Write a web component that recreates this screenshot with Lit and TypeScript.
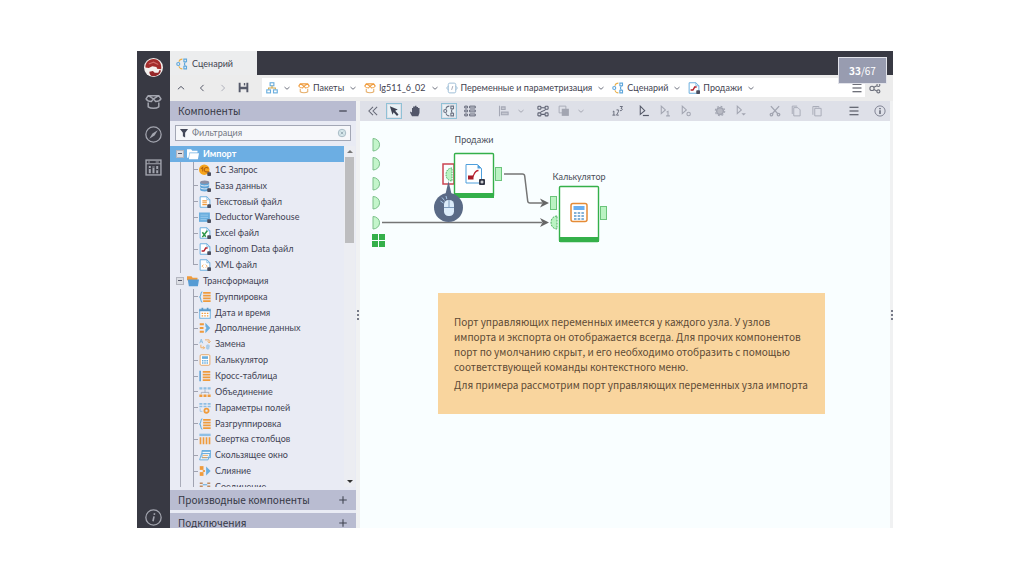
import { LitElement, html, svg, css, nothing } from "lit";
import { customElement, property, state } from "lit/decorators.js";
import { classMap } from "lit/directives/class-map.js";

const BLUE = "#6aaede";
const ORANGE = "#ef9b3c";
const INK = "#4b4e5e";
const GREEN = "#35b04a";

const fileShape = svg`<path d="M1.500 1h9l4 4v10h-13z" fill="#fff" stroke=${BLUE} stroke-width="1.300"/><path d="M10.500 1v4h4" fill="none" stroke=${BLUE}/>`;
const plug = svg`<rect x="11" y="11" width="5" height="5" rx="1" fill="${INK}"/>`;
const bars = (x: number) => svg`<path d="M${x} 2.500h10M${x} 6.200h10M${x} 9.800h10M${x} 13.500h10" stroke=${ORANGE} stroke-width="2.200"/>`;
const box = (flaps: string, body: string) => svg`<g fill="none" stroke-width="1.400" stroke-linejoin="round"><path d="M3 9v4c2.500 1.800 7.500 1.800 10 0V9" stroke=${body}/><path d="M3 2.500h10M8 5.500L3 2.500 1 5.500c1 2 3.500 2.500 5 2.500zM8 5.500l5-3 2 3c-1 2-3.500 2.500-5 2.500z" stroke=${flaps}/></g>`;
const flow = (node: string, link: string) => svg`<g fill="none" stroke-width="1.500"><path d="M4 5c.5-2.500 2-3.500 4.500-3.500M4 11c.5 2.500 2 3.500 4.500 3.500" stroke=${link}/><circle cx="3" cy="8" r="2" stroke=${node}/><path d="M10.500 1.500H14v3.500h-3.500zM10.500 11H14v3.500h-3.500z" stroke=${node}/><path d="M12.500 5.500c-1.500 1.500-1.500 3.500 0 5" stroke=${node}/></g>`;

const ICONS: Record<string, unknown> = {
  onec: svg`<circle cx="7" cy="7.500" r="7" fill="#f7a51c"/><path d="M2.500 6.500L5 4.500V10M12.500 6A3 3 0 1 0 9 10.500H14" fill="none" stroke="#b3620f" stroke-width="1.400"/>${plug}`,
  db: svg`<path d="M1.500 3v10c0 3 12 3 12 0V3" fill="#5fa4d8"/><ellipse cx="7.500" cy="3" rx="6" ry="2.200" fill="#8b8fa5"/><path d="M1.500 6c1 2.500 11 2.500 12 0M1.500 10c1 2.500 11 2.500 12 0" stroke="#e9ecf4" stroke-width="1.300" fill="none"/>${plug}`,
  text: svg`${fileShape}<path d="M4.500 6.500h6M4.500 9h6M4.500 11.500h6" stroke="${ORANGE}" stroke-width="1.400"/>${plug}`,
  warehouse: svg`<rect x="0" y="2" width="14.500" height="12.500" fill=${BLUE}/><path d="M2 5.500h10M2 8.500h10M2 11.500h8" stroke="#a5d2f0" stroke-width="1"/>${plug}`,
  excel: svg`${fileShape}<path d="M4.500 7l4.500 6M11 5l-6.500 8.500" stroke="#2c9648" stroke-width="2"/>${plug}`,
  lgd: svg`${fileShape}<path d="M3.500 10.500h3.500M6.500 11l2.500-4.500h2.500" stroke="#b3202c" stroke-width="2" fill="none"/>${plug}`,
  xml: svg`${fileShape}<path d="M6 7.500L4 9.500l2 2M9 7.500l2 2-2 2" stroke="${ORANGE}" fill="none"/>${plug}`,
  group: svg`<path d="M4.500 1C1.500 1 3.500 6 1 8c2.500 2 .5 7 3.500 7" fill="none" stroke=${BLUE} stroke-width="1.500"/>${bars(5.5)}`,
  date: svg`<rect x="1" y="3" width="14" height="12" fill="#fff" stroke=${BLUE} stroke-width="1.300"/><path d="M.5 4.500h15M4.500 1v3M11.500 1v3" stroke="#5b98c9" stroke-width="2.200"/><path d="M3.500 8.500h2m1.500 0h2m1.500 0h2M3.500 11.800h2m1.500 0h2m1.500 0h2" stroke=${ORANGE} stroke-width="1.500"/>`,
  enrich: svg`<path d="M1 3h5.500M1 8h5M1 13h5.500" stroke=${ORANGE} stroke-width="2.600"/><path d="M8.500 1l6.500 7-6.500 7v-5l1.500-2-1.500-2z" fill=${BLUE}/>`,
  replace: svg`<g fill="none" stroke-width="1.300"><path d="M1 7l2-5.500L5 7M1.800 5h2.500M10.500 9.500v5h2a1.300 1.300 0 0 0 0-2.500h-2m0-2.500h2a1.200 1.200 0 0 1 0 2.500" stroke="#8fbfe4"/><path d="M8 2.500h5.500v4M11.500 4.500l2 2 2-2M2.500 9v4h5M5.500 11l2 2-2 2" stroke="#f0ae67"/></g>`,
  calc: svg`<rect x="1.500" y="1" width="13" height="14" rx="1.500" fill="#fff" stroke="#e4a564" stroke-width="1.300"/><rect x="4" y="3" width="8" height="3.500" fill=${BLUE}/><path d="M4 9h2m1 0h2m1 0h2M4 12h2m1 0h2m1 0h2" stroke=${BLUE} stroke-width="1.800"/>`,
  cross: svg`<path d="M1.500 1v14" stroke="#4d9ad4" stroke-width="1.900"/>${bars(5)}`,
  union: svg`<path d="M.5 3h4m1.500 0h4m1.500 0h4" stroke="#8fbfe4" stroke-width="3"/><path d="M8 5v4M3 10.500V8.500h10v2" stroke="#9aa3b0" fill="none"/><path d="M.5 13h4m1.500 0h4m1.500 0h4" stroke=${ORANGE} stroke-width="3.200"/>`,
  fields: svg`<path d="M.5 2.500h4m1.500 0h4m1.500 0h4M.5 6h4m1.500 0h4m1.500 0h4" stroke="#8fbfe4" stroke-width="2.200"/><circle cx="10" cy="11.500" r="2.800" fill="none" stroke=${ORANGE} stroke-width="2.400"/><path d="M1.500 8.500v4h3" stroke="#8fbfe4" fill="none"/>`,
  fold: svg`<path d="M.5 2.500h15" stroke="#8fbfe4" stroke-width="3.200"/><path d="M2 5.500V15M6 5.500V15M10 5.500V15M14 5.500V15" stroke=${ORANGE} stroke-width="2.200"/>`,
  window: svg`<path d="M4 2h11.500v9.500H4zM.8 14.500L3.500 6h11.300l-2.700 8.500z" fill="#eef5fb" stroke=${BLUE} stroke-width="1.300"/><path d="M4 2.800h11.500" stroke=${BLUE} stroke-width="2"/><path d="M5 8.500h7M4 11.500h7" stroke=${ORANGE}/>`,
  merge: svg`<rect x="1" y="1.500" width="5" height="5" fill=${ORANGE}/><rect x="1" y="9.500" width="5" height="5" fill=${ORANGE}/><path d="M5 8h3" stroke=${ORANGE} stroke-width="2.400"/><path d="M9.500 2l6 6-6 6z" fill=${BLUE}/>`,
  join: svg`<path d="M1 3h4m6 0h4M1 7h4m6 0h4M1 11h4m6 0h4" stroke="#c08c60" stroke-width="2"/><path d="M5 5h6" stroke=${BLUE} stroke-width="1.500"/>`,
  folderOpen: svg`<path d="M0 1.500h5.500l1.500 2h7V6H3.200L2 13H0z" fill="#fff"/><path d="M3.500 7H16l-1.500 8h-12z" fill="#fff"/>`,
  folder: svg`<path d="M0 1.500h6L7.500 3.500H14V7H0z" fill=${ORANGE}/><path d="M1 6h15l-1.500 9H2.500z" fill="#579cd4"/>`,
  flow: flow("#5fa7dc", "#e9b04c"),
  flowDark: flow("#6d7283", "#6d7283"),
  sitemap: svg`<g fill="none" stroke-width="1.500"><rect x="5.500" y="1" width="5" height="4" stroke=${BLUE}/><path d="M8 5v3M3.500 10V8h9v2" stroke="#d0a850"/><rect x="1" y="10.500" width="5" height="4" stroke=${BLUE}/><rect x="10" y="10.500" width="5" height="4" stroke=${BLUE}/></g>`,
  pack: box(ORANGE, "#e5ad68"),
  packLight: box("#a3a5af", "#a3a5af"),
  module: svg`<g fill="none" stroke="#9dbdd6" stroke-width="1.300"><rect x="3" y="1.500" width="10" height="13" rx="2"/><path d="M3 5.500L.8 8 3 10.500M13 5.500L15.200 8 13 10.500"/><path d="M9 5.500l-1.500 5" stroke="#a5a8b5"/></g>`,
  up: svg`<path d="M3 10l5-4.500 5 4.500" fill="none" stroke="${INK}" stroke-width="1.500"/>`,
  left: svg`<path d="M10.500 3L5.500 8l5 5" fill="none" stroke="${INK}" stroke-width="1.500"/>`,
  right: svg`<path d="M5.500 3l5 5-5 5" fill="none" stroke="#a9abb6" stroke-width="1.500"/>`,
  down: svg`<path d="M4 6.500l4 3.500 4-3.500" fill="none" stroke="#666a78" stroke-width="1.500"/>`,
  save: svg`<path d="M1 1h2.800v6h8.400V1H15v14h-2.800v-4.500H3.800V15H1z" fill="#555969"/><path d="M8.500 1.500h2V5h-2z" fill="#555969"/>`,
  menu: svg`<path d="M2 3h12M2 8h12M2 13h12" stroke="#40434f" stroke-width="1.600"/>`,
  share: svg`<g fill="none" stroke="#6d707c" stroke-width="1.500"><circle cx="4" cy="8.500" r="2.800"/><circle cx="12.500" cy="4" r="2"/><circle cx="12.500" cy="12.500" r="2"/><path d="M6.500 7l4-2M6.500 10l4 2"/></g>`,
  collapse: svg`<path d="M8 2.500L2.500 8 8 13.500M13.500 2.500L8 8l5.500 5.500" fill="none" stroke="#666977" stroke-width="1.400"/>`,
  cursor: svg`<path d="M2.500 1.500L13 6 9.500 7.500l4.500 5-2 2-4.500-5L6 13z" fill="#3e4252"/>`,
  hand: svg`<path d="M4 15C2.500 12 1 10 1.500 8.500L4 10V4h1.500V2H8V1h2v1.500h2V4h2v6c0 2-1.500 3-1.500 5z" fill="#53576a"/>`,
  list: svg`<g fill="none" stroke="#606475" stroke-width="1.300"><path d="M1 1.500h3.500v2.500H1zM7.500 1.500H15v2.500H7.500zM1 6.700h3.500v2.500H1zM7.500 6.700H15v2.500H7.500zM1 12h3.500v2.500H1zM7.500 12H15v2.500H7.500z"/></g>`,
  align: svg`<path d="M2 1v14M4.500 2.500h5v3.500h-5zM4.500 9.500h9v3.500h-9z" fill="#c5c7d0" stroke="#a5a8b5" stroke-width="1.400"/>`,
  graph: svg`<g fill="none" stroke="#5c6071" stroke-width="1.400"><rect x="1.200" y="1.700" width="4" height="4" rx="1"/><rect x="10.800" y="1.700" width="4" height="4" rx="1"/><rect x="1.200" y="10.500" width="4" height="4" rx="1"/><rect x="10.800" y="10.500" width="4" height="4" rx="1"/><path d="M5.500 3.700h5M5.500 12.500h5M11.500 6C9 9 7 7 4.500 10"/></g>`,
  layers: svg`<path d="M1.500 1.500h9v9h-9z" fill="none" stroke="#a9acb8" stroke-width="1.300"/><path d="M5 5h9.500v9.500H5z" fill="#a2a5b1"/>`,
  order: svg`<g fill="none" stroke="#696d7c" stroke-width="1.300"><path d="M1 9l1.500-1v5.500M0.500 13.500h4M6 6.500h2.500v2.500L6 13.500h3M10.500 2H14L12 4.500c3 0 2 3.500-1.500 3"/></g>`,
  run: svg`<path d="M3 1.500v11l6-5z" fill="none" stroke="#555968" stroke-width="1.400"/><path d="M6.500 14h8" stroke="#555968" stroke-width="1.600"/>`,
  runOne: svg`<path d="M3 1.500v10l5.500-5z" fill="none" stroke="#a2a5b1" stroke-width="1.400"/><path d="M10 9.500l2-1V14M9.500 14.500h5" fill="none" stroke="#a2a5b1" stroke-width="1.400"/>`,
  runGear: svg`<path d="M3 1.500v10l5.500-5z" fill="none" stroke="#a2a5b1" stroke-width="1.400"/><circle cx="11.500" cy="12" r="2.300" fill="none" stroke="#a2a5b1" stroke-width="1.400"/>`,
  runDown: svg`<path d="M3 1.500v10l5.500-5z" fill="none" stroke="#a2a5b1" stroke-width="1.400"/><path d="M8.500 11h6l-3 3z" fill="#a2a5b1"/>`,
  gear: svg`<circle cx="8" cy="8" r="4.500" fill="#b8bac4" stroke="#a2a5b1" stroke-width="2"/><circle cx="8" cy="8" r="6.300" fill="none" stroke="#a2a5b1" stroke-width="1.500" stroke-dasharray="2.500 2.450"/>`,
  cut: svg`<g fill="none" stroke="#a2a5b1" stroke-width="1.700"><path d="M2.500 1.500L12 12M13.500 1.500L4 12"/><circle cx="3.300" cy="12.800" r="1.700"/><circle cx="12.700" cy="12.800" r="1.700"/></g>`,
  copy: svg`<path d="M3 12V1.500h6.500M5 3.500h5.500L13.500 6.500v8H5z" fill="none" stroke="#a9acb8" stroke-width="1.300"/>`,
  paste: svg`<path d="M2.500 13V2h8v1.500M5 4.500h8.500v10H5z" fill="none" stroke="#a9acb8" stroke-width="1.300"/><path d="M4.500 1.500h4v1.500h-4z" fill="#a9acb8"/>`,
  info: svg`<circle cx="8" cy="8" r="6.800" fill="none" stroke="#777b8b" stroke-width="1.200"/><path d="M8 4v1.700M8 7v5" stroke="#555968" stroke-width="1.800"/>`,
  infoLight: svg`<circle cx="8" cy="8" r="7.200" fill="none" stroke="#a3a5af" stroke-width="1.200"/><path d="M9 4l-.3 1.500M8.500 7l-1 4.500" stroke="#a3a5af" stroke-width="1.500"/>`,
  compass: svg`<circle cx="8" cy="8" r="7.200" fill="none" stroke="#a3a5af" stroke-width="1.200"/><path d="M12 4L9 9l-5 3 3-5z" fill="#a3a5af"/>`,
  desk: svg`<rect x="1" y="1" width="14" height="14" fill="none" stroke="#a3a5af" stroke-width="1.300"/><path d="M1 4.500h14M3 2.800h1.500M10 2.800h3" stroke="#a3a5af"/><path d="M4.500 6.500v7M8 6.500v7M11.500 6.500v7" stroke="#a3a5af" stroke-width="1.900"/><path d="M3.500 9h2M7 7.500h2M10.500 10h2" stroke="#383943"/>`,
  logo: svg`<circle cx="8" cy="8" r="8" fill="#f5f1ef"/><path d="M1.200 8C1 4 4 1 8 .8c4.500 0 7.200 4 6.500 8.700l-3.500-.5-.5-1.500L7 7 4 8.500z" fill="#a42d2c"/><path d="M4.500 11.500l3-.5 1.500 1.500h3l1-2.500 1.300.5C13.500 14 10.500 15.300 8 15.300S4.500 13.500 4.500 11.500z" fill="#96282a"/><path d="M4 5l4-1.500L12 5.500" stroke="#cf6a68" fill="none"/>`,
  funnel: svg`<path d="M1.500 1.500h13L9.800 7.500V15l-3.600-2V7.500z" fill="#444859"/>`,
  clear: svg`<circle cx="8" cy="8" r="6" fill="#d5e6ea" stroke="#a5b8c2" stroke-width="1.500"/><path d="M6 6l4 4M10 6l-4 4" stroke="#93a5b2" stroke-width="1.300"/>`,
  minus: svg`<path d="M2 8h12" stroke="#3f4250" stroke-width="2"/>`,
  plus: svg`<path d="M2 8h12M8 2v12" stroke="#3f4250" stroke-width="1.700"/>`,
};

@customElement("lg-icon")
export class LgIcon extends LitElement {
  @property() name = "";
  static styles = css`
    :host { display: inline-flex; flex: none; width: 12px; height: 12px; }
    svg { width: 100%; height: 100%; display: block; }
  `;
  render() {
    return html`<svg viewBox="0 0 16 16" aria-hidden="true">${ICONS[this.name] ?? nothing}</svg>`;
  }
}

interface Row { icon: string; label: string; folder?: boolean; last?: boolean; selected?: boolean; }

const ROWS: Row[] = [
  { icon: "folderOpen", label: "Импорт", folder: true, selected: true },
  { icon: "onec", label: "1С Запрос" },
  { icon: "db", label: "База данных" },
  { icon: "text", label: "Текстовый файл" },
  { icon: "warehouse", label: "Deductor Warehouse" },
  { icon: "excel", label: "Excel файл" },
  { icon: "lgd", label: "Loginom Data файл" },
  { icon: "xml", label: "XML файл", last: true },
  { icon: "folder", label: "Трансформация", folder: true },
  { icon: "group", label: "Группировка" },
  { icon: "date", label: "Дата и время" },
  { icon: "enrich", label: "Дополнение данных" },
  { icon: "replace", label: "Замена" },
  { icon: "calc", label: "Калькулятор" },
  { icon: "cross", label: "Кросс-таблица" },
  { icon: "union", label: "Объединение" },
  { icon: "fields", label: "Параметры полей" },
  { icon: "group", label: "Разгруппировка" },
  { icon: "fold", label: "Свертка столбцов" },
  { icon: "window", label: "Скользящее окно" },
  { icon: "merge", label: "Слияние" },
  { icon: "join", label: "Соединение" },
];

@customElement("lg-components")
export class LgComponents extends LitElement {
  @state() private filter = "";
  static styles = css`
    :host { display: flex; flex-direction: column; min-height: 0; background: #e9ebf4; color: #3f4253; overflow: hidden; }
    h2 { margin: 0; font-family: "Noto Sans CJK SC", "Noto Sans", sans-serif; font-size: 10px; font-weight: 400; line-height: 20px; background: #b9bcd1; color: #353845; flex: none; }
    .head { all: unset; box-sizing: border-box; width: 100%; height: 20px; display: flex; align-items: center; justify-content: space-between; padding: 0 8px; cursor: pointer; }
    .head lg-icon { width: 10px; height: 10px; }
    .search { flex: none; display: flex; align-items: center; gap: 3px; margin: 4px 5px 5px; padding: 0 3px; height: 16px; box-sizing: border-box; border: 1px solid #a3a7b5; background: #f6f7fa; }
    .search lg-icon { width: 10px; height: 10px; }
    input { all: unset; flex: 1; min-width: 0; font-size: 9px; line-height: 14px; color: #555869; }
    input::placeholder { color: #747784; opacity: 1; }
    .clear { all: unset; display: flex; cursor: pointer; }
    .body { flex: 1 1 0; min-height: 0; display: flex; overflow: hidden; }
    ul { flex: 1; min-width: 0; height: 349px; margin: 0; padding: 0; list-style: none; display: grid; grid-auto-rows: 1fr; }
    li { display: flex; align-items: center; min-height: 0; padding-left: 10px; font-size: 9px; line-height: 14px; white-space: nowrap; }
    .selected { background: #6caee3; color: #fff; font-weight: 700; }
    .trunk { align-self: stretch; width: 13px; border-left: 1px solid #a9acb9; box-sizing: border-box; }
    .branch { align-self: stretch; width: 6px; display: flex; flex-direction: column; box-sizing: border-box; }
    .branch i { flex: 1; border-left: 1px solid #a0a3b1; }
    .branch i:first-child { border-bottom: 1px solid #a0a3b1; margin-right: 1px; }
    .branch.last i:last-child { border-left-color: transparent; }
    .label { margin-left: 4px; }
    .toggle { all: unset; box-sizing: border-box; width: 8px; height: 8px; margin: 0 3px 0 -4px; border: 1px solid #b4b6c0; background: #dcdee4; display: flex; align-items: center; justify-content: center; cursor: pointer; }
    .toggle::before { content: ""; width: 4px; height: 1px; background: #55586a; }
    .bar { flex: none; width: 11px; margin-right: 1px; display: flex; flex-direction: column; align-items: center; background: #ecedf2; }
    .arrow { width: 0; height: 0; border: 3px solid transparent; border-top-width: 0; border-bottom-color: #777; margin: 4px 0; }
    .arrow.down { border-top: 3px solid #333; border-bottom-width: 0; }
    .thumb { width: 9px; height: 86px; background: #bdbdbf; }
    .rest { flex: 1; }
    .below { margin-top: 3px; }
    .cut { margin-bottom: -5px; }
  `;
  private row(r: Row) {
    return html`<li class=${classMap({ selected: !!r.selected })}>
      ${r.folder
        ? html`<button class="toggle" aria-label="Свернуть"></button>`
        : html`<span class="trunk"></span><span class=${classMap({ branch: true, last: !!r.last })}><i></i><i></i></span>`}
      <lg-icon name=${r.icon}></lg-icon><span class="label">${r.label}</span>
    </li>`;
  }
  render() {
    const q = this.filter.toLowerCase();
    return html`
      <h2><button class="head">Компоненты<lg-icon name="minus"></lg-icon></button></h2>
      <div class="search">
        <lg-icon name="funnel"></lg-icon>
        <input aria-label="Фильтрация" placeholder="Фильтрация" .value=${this.filter}
          @input=${(e: Event) => (this.filter = (e.target as HTMLInputElement).value)} />
        <button class="clear" aria-label="Очистить" @click=${() => (this.filter = "")}><lg-icon name="clear"></lg-icon></button>
      </div>
      <div class="body">
        <ul>${ROWS.filter((r) => r.folder || r.label.toLowerCase().includes(q)).map((r) => this.row(r))}</ul>
        <div class="bar"><span class="arrow"></span><span class="thumb"></span><span class="rest"></span><span class="arrow down"></span></div>
      </div>
      <h2 class="below"><button class="head">Производные компоненты<lg-icon name="plus"></lg-icon></button></h2>
      <h2 class="below cut"><button class="head">Подключения<lg-icon name="plus"></lg-icon></button></h2>
    `;
  }
}

@customElement("lg-canvas")
export class LgCanvas extends LitElement {
  static styles = css`
    :host { display: block; position: relative; overflow: hidden; background: #f9feff; color: #4a4d58; }
    .links { position: absolute; inset: 0; width: 100%; height: 100%; }
    .name { position: absolute; font-size: 9px; line-height: 14px; transform: translateX(-50%); white-space: nowrap; }
    .name-sales { left: 114px; top: 12px; }
    .name-calc { left: 219px; top: 49px; }
    .note { position: absolute; left: 78px; top: 172px; width: 387px; box-sizing: border-box; padding: 21px 16px 22px; background: #f9d59e; color: #5d4a35; font-family: "Noto Sans CJK SC", "Noto Sans", sans-serif; font-size: 10px; line-height: 15px; white-space: nowrap; }
    .note p { margin: 0 0 3px; }
    .note p:last-child { margin: 0; }
  `;
  render() {
    return html`
      <svg class="links" aria-hidden="true">
        <g fill="#c4f5cb" stroke="#7cc08a" stroke-width="1">
          ${[17.5, 36.5, 56.5, 75.5, 95.5].map((y) => svg`<path d="M13 ${y}v12.500a6.500 6.200 0 0 0 0-12.500z"/>`)}
        </g>
        <g fill="${GREEN}"><rect x="12" y="113" width="6" height="6"/><rect x="19" y="113" width="6" height="6"/><rect x="12" y="120" width="6" height="6"/><rect x="19" y="120" width="6" height="6"/></g>
        <g fill="none" stroke="#757575" stroke-width="1.500" stroke-linejoin="round">
          <path d="M22 101.500H182"/><path d="M144 53h18.500c1.500 0 2 .5 2.200 2l3 25c.2 1.500 1 2 2.300 2H182"/>
        </g>
        <path d="M189 101.500l-9-4.500 2.500 4.500-2.500 4.500zM189 82l-9-4.500 2.500 4.500-2.500 4.500z" fill="#666"/>
        <g stroke="#6cc47b" fill="#baf3c2">
          <rect x="135.500" y="46.500" width="6" height="13"/><rect x="190.500" y="75.500" width="6" height="13"/><rect x="240.500" y="85.500" width="6" height="13"/>
          <path d="M92 47c-8 0-8 13 0 13z" stroke="#4faf62" stroke-dasharray="1.500 1"/><path d="M197 95c-8 0-8 13 0 13z" stroke="#4faf62" stroke-dasharray="2 1"/>
        </g>
        <rect x="83" y="43" width="11" height="20" fill="none" stroke="#ca4452" stroke-width="1.500"/>
        <rect x="94.500" y="32.500" width="39" height="43" rx="1" fill="#fff" stroke="${GREEN}" stroke-width="1.400"/><path d="M94 72h40v5H94z" fill="${GREEN}"/>
        <rect x="199.500" y="65.500" width="39" height="55" rx="1" fill="#fff" stroke="${GREEN}" stroke-width="1.400"/><path d="M199 116h40v5h-40z" fill="${GREEN}"/>
        <path d="M106 43.500h11.500l4 4V62H106z" fill="#fff" stroke="#4f9fdc"/><path d="M117.500 43.500v4h4z" fill="#4f9fdc"/>
        <path d="M111 57c3.500 0 2-7.500 7.500-7.500" fill="none" stroke="#bd2230" stroke-width="1.300"/><rect x="108" y="54.500" width="5.500" height="4" fill="#a81c28"/>
        <rect x="119" y="58" width="6" height="6" rx="1" fill="#333644"/><path d="M120.500 61h3M122 59.500v3" stroke="#fff"/>
        <rect x="211" y="82.500" width="16" height="18" rx="2" fill="#fff" stroke="#e58b36" stroke-width="1.500"/><rect x="213.500" y="85" width="11" height="4" fill="#6aaef0"/>
        <path d="M214 92h10M214 95h10M214 98h10" stroke="#5b98c9" stroke-width="1.500" stroke-dasharray="2.500 1.200"/>
        <path d="M88.500 60l3 13h-6z" fill="#5a6a86"/><circle cx="88.500" cy="86.500" r="14.500" fill="#5a6a86"/>
        <rect x="84" y="79" width="10" height="16" rx="4.500" fill="#dcecfa"/><path d="M84 86.500h10M89 79v7.500" stroke="#7f9cbd"/>
        <path d="M80.500 80l3 2M82 76.500l2.500 3M86 75l.8 3" stroke="#a9c9e8" stroke-width="1"/>
      </svg>
      <div class="name name-sales">Продажи</div>
      <div class="name name-calc">Калькулятор</div>
      <aside class="note">
        <p>Порт управляющих переменных имеется у каждого узла. У узлов<br />импорта и экспорта он отображается всегда. Для прочих компонентов<br />порт по умолчанию скрыт, и его необходимо отобразить с помощью<br />соответствующей команды контекстного меню.</p>
        <p>Для примера рассмотрим порт управляющих переменных узла импорта</p>
      </aside>
    `;
  }
}

const CRUMBS: [string, string][] = [
  ["sitemap", ""],
  ["pack", "Пакеты"],
  ["pack", "lg511_6_02"],
  ["module", "Переменные и параметризация"],
  ["flow", "Сценарий"],
  ["lgd", "Продажи"],
];

const TOOLS: string[][] = [
  ["collapse", "cursor", "hand"],
  ["flowDark", "list"],
  ["align", "down"],
  ["graph", "layers", "down"],
  ["order"],
  ["run", "runOne", "runGear"],
  ["gear", "runDown"],
  ["cut", "copy", "paste"],
];

@customElement("app-root")
export class AppRoot extends LitElement {
  @state() private active = new Set(["cursor", "flowDark"]);
  static styles = css`
    :host { display: block; box-sizing: border-box; height: 100vh; padding: 51px 131px 46px 137px; background: #fff; font-family: Lato, "Noto Sans", sans-serif; color: #3f4250; }
    button { all: unset; display: flex; align-items: center; justify-content: center; cursor: pointer; }
    .frame { position: relative; height: 100%; display: grid; grid-template-columns: 33px minmax(0, 1fr); background: #ececec; }
    .rail { background: #383943; display: flex; flex-direction: column; align-items: center; padding: 7px 0 2px; gap: 16px; }
    .rail lg-icon { width: 17px; height: 17px; }
    .rail .brand { display: flex; }
    .rail .brand lg-icon { width: 19px; height: 19px; }
    .rail .end { margin-top: auto; }
    .main { display: flex; flex-direction: column; min-width: 0; min-height: 0; }
    .tabs { flex: none; height: 24px; background: #383943; display: flex; }
    .tab { width: 87px; box-sizing: border-box; padding: 1px 6px 0; justify-content: flex-start; gap: 4px; background: #ecedee; font-size: 9px; line-height: 14px; }
    .nav { flex: none; height: 25px; display: flex; align-items: center; }
    .steps { display: flex; }
    .steps button { width: 21px; height: 18px; }
    .steps button:last-child lg-icon { width: 11px; height: 11px; }
    .steps lg-icon { width: 10px; height: 10px; }
    .crumbs { flex: 1; min-width: 0; height: 19px; margin-left: 8px; padding: 0 2px 0 4px; background: #fff; display: flex; align-items: center; font-size: 9px; line-height: 14px; white-space: nowrap; }
    .crumbs a { display: flex; align-items: center; gap: 3px; color: inherit; text-decoration: none; }
    .crumbs .more { width: 12px; margin: 0 5px 0 3px; }
    .crumbs .more lg-icon { width: 10px; height: 10px; }
    .crumbs .all { margin-left: auto; }
    .share { width: 20px; margin-right: 8px; }
    .work { flex: 1; min-height: 0; display: grid; grid-template-columns: 186px 4px minmax(0, 1fr) 3px; padding-top: 1px; }
    .grip { display: flex; align-items: center; justify-content: center; background: #f0f1f2; }
    .grip::before { content: ""; width: 2px; height: 10px; background: repeating-linear-gradient(#777a88 0 2px, transparent 2px 4px); }
    .area { display: flex; flex-direction: column; min-width: 0; min-height: 0; }
    .tools { flex: none; height: 20px; background: #dee0e8; display: flex; align-items: center; padding: 0 0 0 2px; gap: 13px; }
    .set { display: flex; }
    .set button { width: 21px; height: 18px; }
    .set .slim { width: 13px; }
    .set .slim lg-icon { width: 10px; height: 10px; }
    .set .on lg-icon { outline: 1px solid #8fc1d6; outline-offset: 1px; background: #e9f2f6; }
    .tight { margin-left: -8px; }
    .wide { margin-left: 7px; }
    .faded { opacity: 0.5; }
    .right { margin-left: auto; display: flex; gap: 5px; }
    lg-canvas { flex: 1; min-height: 0; }
    .page { position: absolute; right: 6px; top: 6px; width: 49px; height: 27px; box-sizing: border-box; border: 1px solid #e2e3ea; background: #989cb0; color: #fff; display: flex; align-items: center; justify-content: center; font-family: "Noto Sans CJK SC", "Noto Sans", sans-serif; font-size: 10px; line-height: 14px; }
  `;
  private toggle(name: string) {
    const next = new Set(this.active);
    next.has(name) ? next.delete(name) : next.add(name);
    this.active = next;
  }
  render() {
    return html`
      <div class="frame">
        <nav class="rail" aria-label="Разделы">
          <a class="brand" href="#" aria-label="Loginom"><lg-icon name="logo"></lg-icon></a>
          <button aria-label="Пакеты"><lg-icon name="packLight"></lg-icon></button>
          <button aria-label="Навигация"><lg-icon name="compass"></lg-icon></button>
          <button aria-label="Администрирование"><lg-icon name="desk"></lg-icon></button>
          <button class="end" aria-label="Справка"><lg-icon name="infoLight"></lg-icon></button>
        </nav>
        <div class="main">
          <div class="tabs"><button class="tab"><lg-icon name="flow"></lg-icon>Сценарий</button></div>
          <div class="nav">
            <div class="steps">
              ${["up", "left", "right", "save"].map((n) => html`<button aria-label=${n}><lg-icon name=${n}></lg-icon></button>`)}
            </div>
            <nav class="crumbs" aria-label="Путь">
              ${CRUMBS.map(([icon, label]) => html`<a href="#" aria-label=${label || "Корень"}><lg-icon name=${icon}></lg-icon>${label || nothing}</a><button class="more" aria-label="Открыть"><lg-icon name="down"></lg-icon></button>`)}
              <button class="all" aria-label="Меню"><lg-icon name="menu"></lg-icon></button>
            </nav>
            <button class="share" aria-label="Связи"><lg-icon name="share"></lg-icon></button>
          </div>
          <div class="work">
            <lg-components></lg-components>
            <div class="grip"></div>
            <div class="area">
              <div class="tools">
                ${TOOLS.map((set, i) => html`<div class=${classMap({ set: true, tight: i === 3 || i === 5, wide: i === 4 })}>
                  ${set.map((n) => html`<button aria-label=${n} class=${classMap({ slim: n === "down", faded: n === "down", on: this.active.has(n) })} @click=${() => this.toggle(n)}><lg-icon name=${n}></lg-icon></button>`)}
                </div>`)}
                <div class="set right">
                  <button aria-label="Меню"><lg-icon name="menu"></lg-icon></button>
                  <button aria-label="Сведения"><lg-icon name="info"></lg-icon></button>
                </div>
              </div>
              <lg-canvas></lg-canvas>
            </div>
            <div class="grip"></div>
          </div>
        </div>
        <div class="page"><b>33</b>/67</div>
      </div>
    `;
  }
}
